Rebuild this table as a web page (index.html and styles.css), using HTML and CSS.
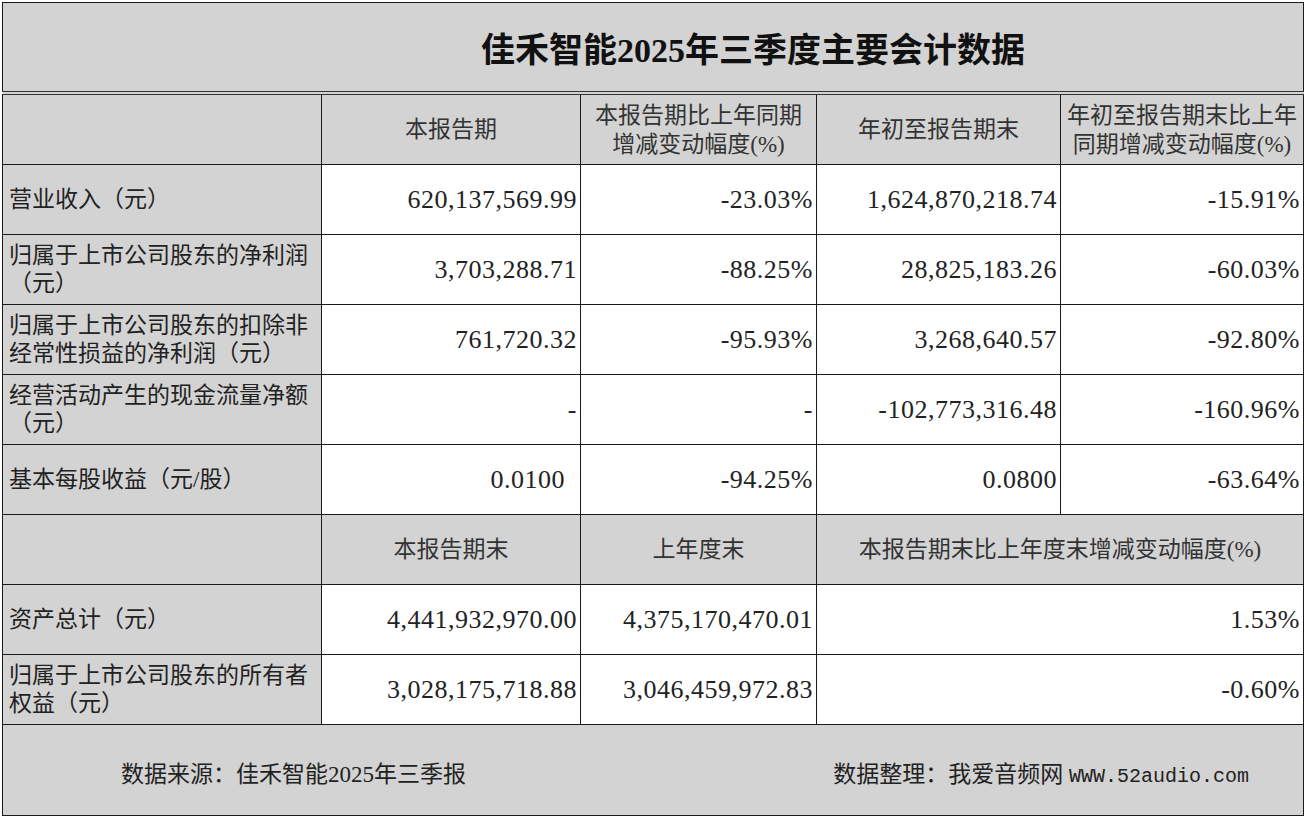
FILE: index.html
```html
<!DOCTYPE html>
<html lang="zh-CN">
<head>
<meta charset="utf-8">
<title>佳禾智能2025年三季度主要会计数据</title>
<link rel="stylesheet" href="styles.css">
</head>
<body>
<div class="page">
<table class="sheet">
  <colgroup>
    <col class="c1"><col class="c2"><col class="c3"><col class="c4"><col class="c5">
  </colgroup>
  <tbody>
    <tr class="title-row">
      <td colspan="5" class="title">佳禾智能2025年三季度主要会计数据</td>
    </tr>
    <tr class="row">
      <td class="label"></td>
      <td class="head">本报告期</td>
      <td class="head">本报告期比上年同期<br>增减变动幅度(%)</td>
      <td class="head">年初至报告期末</td>
      <td class="head">年初至报告期末比上年<br>同期增减变动幅度(%)</td>
    </tr>
    <tr class="row">
      <td class="label">营业收入（元）</td>
      <td class="num">620,137,569.99</td>
      <td class="num">-23.03%</td>
      <td class="num">1,624,870,218.74</td>
      <td class="num">-15.91%</td>
    </tr>
    <tr class="row">
      <td class="label">归属于上市公司股东的净利润<br>（元）</td>
      <td class="num">3,703,288.71</td>
      <td class="num">-88.25%</td>
      <td class="num">28,825,183.26</td>
      <td class="num">-60.03%</td>
    </tr>
    <tr class="row">
      <td class="label">归属于上市公司股东的扣除非<br>经常性损益的净利润（元）</td>
      <td class="num">761,720.32</td>
      <td class="num">-95.93%</td>
      <td class="num">3,268,640.57</td>
      <td class="num">-92.80%</td>
    </tr>
    <tr class="row">
      <td class="label">经营活动产生的现金流量净额<br>（元）</td>
      <td class="num">-</td>
      <td class="num">-</td>
      <td class="num">-102,773,316.48</td>
      <td class="num">-160.96%</td>
    </tr>
    <tr class="row">
      <td class="label">基本每股收益（元/股）</td>
      <td class="num inset">0.0100</td>
      <td class="num">-94.25%</td>
      <td class="num">0.0800</td>
      <td class="num">-63.64%</td>
    </tr>
    <tr class="row">
      <td class="label"></td>
      <td class="head">本报告期末</td>
      <td class="head">上年度末</td>
      <td class="head" colspan="2">本报告期末比上年度末增减变动幅度(%)</td>
    </tr>
    <tr class="row">
      <td class="label">资产总计（元）</td>
      <td class="num">4,441,932,970.00</td>
      <td class="num">4,375,170,470.01</td>
      <td class="num" colspan="2">1.53%</td>
    </tr>
    <tr class="row">
      <td class="label">归属于上市公司股东的所有者<br>权益（元）</td>
      <td class="num">3,028,175,718.88</td>
      <td class="num">3,046,459,972.83</td>
      <td class="num" colspan="2">-0.60%</td>
    </tr>
    <tr class="foot-row">
      <td colspan="5" class="foot">
        <div class="foot-inner">
          <span class="source">数据来源：佳禾智能2025年三季报</span>
          <span class="credit">数据整理：我爱音频网 <span class="url">WWW.52audio.com</span></span>
        </div>
      </td>
    </tr>
  </tbody>
</table>
</div>
</body>
</html>
```

FILE: styles.css
```css
html, body {
  margin: 0;
  padding: 0;
  background: #ffffff;
}

.page {
  padding: 2px 2px 0 2px;
}

.sheet {
  width: 1301px;
  border-collapse: collapse;
  table-layout: fixed;
  font-family: "Liberation Serif", "Noto Sans CJK SC", serif;
  color: #1a1a1a;
  border: 1px solid #111;
}

.c1 { width: 319px; }
.c2 { width: 259px; }
.c3 { width: 236px; }
.c4 { width: 244px; }
.c5 { width: 243px; }

.sheet td {
  border: 1px solid #1a1a1a;
  padding: 0;
}

.title-row td {
  height: 88px;
  background: #d3d3d3;
  border-bottom: 4px double #333;
}

.title {
  font-family: "Liberation Serif", "Noto Sans CJK SC", serif;
  font-size: 34px;
  font-weight: 700;
  text-align: center;
  padding-left: 200px !important;
  color: #111;
  letter-spacing: 0;
}

.row td {
  height: 69px;
}

.label {
  background: #d3d3d3;
  font-size: 23px;
  line-height: 28px;
  padding-left: 6px !important;
  text-align: left;
  color: #222;
  white-space: nowrap;
}

.head {
  background: #d3d3d3;
  font-size: 23px;
  line-height: 29px;
  text-align: center;
  color: #333;
  white-space: nowrap;
}

.num {
  background: #ffffff;
  font-family: "Liberation Serif", serif;
  font-size: 26px;
  letter-spacing: 0.5px;
  text-align: right;
  padding-right: 3px !important;
  color: #222;
  white-space: nowrap;
}

.num.inset {
  padding-right: 15px !important;
}

.foot-row td {
  height: 90px;
  background: #d3d3d3;
}

.foot-inner {
  display: flex;
  justify-content: space-between;
  align-items: center;
  padding: 4px 54px 0 118px;
  font-size: 23px;
  color: #222;
}

.url {
  font-family: "Liberation Mono", monospace;
  font-size: 20px;
}
```
